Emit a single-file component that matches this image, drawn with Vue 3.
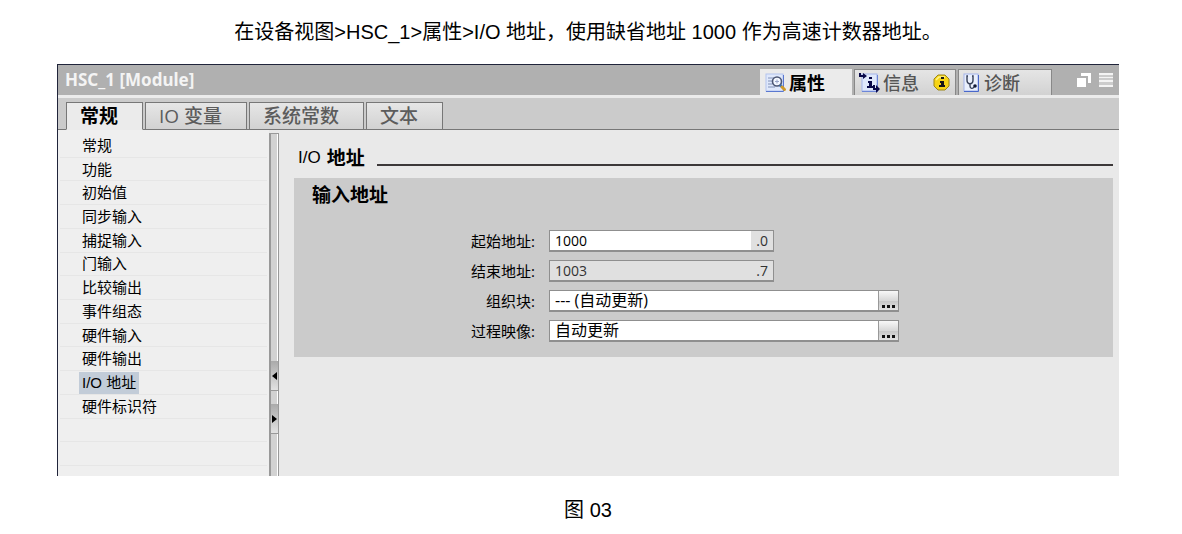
<script setup>
import { ref } from 'vue'

const sections = ['常规', '功能', '初始值', '同步输入', '捕捉输入', '门输入', '比较输出', '事件组态', '硬件输入', '硬件输出', 'I/O 地址', '硬件标识符']
const current = ref('I/O 地址')
const tabs = ['常规', 'IO 变量', '系统常数', '文本']
const activeTab = ref('常规')
const start = ref('1000')
const end = ref('1003')
const block = ref('--- (自动更新)')
const image = ref('自动更新')
</script>

<template>
  <main class="page">
    <p class="caption">在设备视图&gt;HSC_1&gt;属性&gt;I/O 地址，使用缺省地址 1000 作为高速计数器地址。</p>

    <section class="window">
      <header class="titlebar">
        <h1>HSC_1 [Module]</h1>
        <nav class="views">
          <button type="button" class="view on props">
            <svg width="22" height="20" viewBox="0 0 22 20">
              <rect x="1" y="1" width="17" height="17" fill="#dfe8fb" stroke="#b4c4ee" />
              <path d="M1 18.5H18.5V2" fill="none" stroke="#5a78d0" />
              <path d="M3 5h6M3 8h4M3 11h4M3 14h7" stroke="#8292b8" />
              <circle cx="12" cy="8.500" r="4.500" fill="#f3f7ff" stroke="#4c5673" stroke-width="1.600" />
              <path d="M10 8.500h4M12 6.500v4" stroke="#98a4c6" />
              <path d="M15 12l1.500 1.500" stroke="#386fb7" stroke-width="3" />
              <path d="M17 14l2.500 2.500" stroke="#d09a28" stroke-width="3" stroke-linecap="round" />
            </svg>
            <span>属性</span>
          </button>
          <button type="button" class="view info">
            <svg width="22" height="20" viewBox="0 0 22 20">
              <rect x="3" y="1" width="15" height="17" fill="#dfe8fb" stroke="#a3b4ea" />
              <path d="M3 18.500H18.500V2" fill="none" stroke="#6c86d8" />
              <path d="M1 0v3h4M15 12v4h3" fill="none" stroke="#080848" stroke-width="2" />
              <path d="M4 0l4 3-4 3zM17 12l4 4-4 4z" fill="#080848" />
              <path d="M10 4h3v2h-3zM9 8h4v5h2v2H8v-2h2v-3H9z" fill="#080848" />
            </svg>
            <span>信息</span>
            <svg class="badge" width="18" height="18" viewBox="0 0 18 18">
              <path d="M5 1h7l4 4v7l-4 4H5l-4-4V5z" fill="#f6d416" stroke="#9c8616" />
              <path d="M3 6l3-3h6" fill="none" stroke="#fff48a" stroke-width="1.500" />
              <path d="M8 3h3v2H8zM7 7h4v4h1v2H6v-2h2V9H7z" fill="#161616" />
            </svg>
          </button>
          <button type="button" class="view diag">
            <svg width="17" height="20" viewBox="0 0 17 20">
              <rect x="1" y="1" width="14" height="17" fill="#eaf0fd" stroke="#a3b4ea" />
              <path d="M1 18.500H15.500V2" fill="none" stroke="#4968ca" />
              <path d="M5 3H4v4c0 5 6 5 6 0V3H9M7 11v2c0 3 3 3 4 1" fill="none" stroke="#353f58" stroke-width="1.400" />
              <circle cx="12" cy="13" r="1.800" fill="#111936" />
            </svg>
            <span>诊断</span>
          </button>
        </nav>
        <div class="controls">
          <button type="button" aria-label="浮动">
            <svg width="15" height="15" viewBox="0 0 15 15">
              <path d="M5 0h10v10h-3V3H5z" fill="#fff" />
              <path d="M1 5h9v9H1z" fill="#fff" />
            </svg>
          </button>
          <button type="button" aria-label="折叠">
            <svg width="14" height="15" viewBox="0 0 14 15">
              <path d="M0 0h14v14H0z" fill="#ccc" />
              <path d="M0 0h14v2H0zM0 4h14v1H0zM0 7h14v2H0zM0 12h14v2H0z" fill="#f4f4f4" />
            </svg>
          </button>
        </div>
      </header>

      <nav class="tabs">
        <button v-for="t in tabs" :key="t" type="button" class="tab" :class="{ active: t === activeTab }" @click="activeTab = t">{{ t }}</button>
      </nav>

      <div class="body">
        <ul class="tree">
          <li v-for="s in sections" :key="s">
            <button type="button" :class="{ chosen: s === current }" @click="current = s">{{ s }}</button>
          </li>
          <li></li>
          <li></li>
        </ul>
        <div class="splitter">
          <button type="button" aria-label="向左折叠"><svg width="5" height="8" viewBox="0 0 5 8"><path d="M5 0v8L0 4z" /></svg></button>
          <button type="button" aria-label="向右展开"><svg width="5" height="8" viewBox="0 0 5 8"><path d="M0 0v8l5-4z" /></svg></button>
        </div>
        <div class="content">
          <h2><span class="latin">I/O</span> 地址</h2>
          <div class="group">
            <h3>输入地址</h3>
            <form class="form" @submit.prevent>
              <label for="start">起始地址:</label>
              <div class="field short"><input id="start" v-model="start" type="text"><span class="bit">.0</span></div>
              <label for="end">结束地址:</label>
              <div class="field short locked"><input id="end" v-model="end" type="text" readonly><span class="bit">.7</span></div>
              <label for="block">组织块:</label>
              <div class="field"><input id="block" v-model="block" type="text"><button type="button" aria-label="选择组织块"><i></i><i></i><i></i></button></div>
              <label for="image">过程映像:</label>
              <div class="field"><input id="image" v-model="image" type="text"><button type="button" aria-label="选择过程映像"><i></i><i></i><i></i></button></div>
            </form>
          </div>
        </div>
      </div>
    </section>

    <p class="figure">图 03</p>
  </main>
</template>

<style>
body {
  background: #fff;
}
</style>

<style scoped>
* {
  box-sizing: border-box;
}
button,
input {
  font: inherit;
  color: inherit;
  margin: 0;
  padding: 0;
  border: 0;
  background: none;
}
svg {
  display: block;
  flex: none;
}
.page {
  color: #000;
  font-family: "Liberation Sans", "Noto Sans CJK SC", sans-serif;
}
.caption,
.figure {
  margin: 0;
  font-size: 20px;
  line-height: 28px;
  text-align: center;
}
.caption {
  padding: 18px 6px 18px 0;
}
.figure {
  padding: 20px 6px 8px 0;
}
.window {
  margin: 0 63px 0 57px;
  border-top: 1px solid #20243a;
  border-left: 1px solid #20243a;
  background: #e9e9e9;
  font-family: "Open Sans", "Noto Sans CJK SC", sans-serif;
}
.titlebar {
  display: flex;
  height: 33px;
  background: #b0b0b0;
  border-bottom: 3px solid #ebebeb;
}
h1 {
  flex: 1;
  margin: 0;
  padding-left: 7px;
  font-family: "Noto Sans", sans-serif;
  font-size: 17px;
  font-weight: 700;
  line-height: 30px;
  color: #f4f4f4;
}
.views {
  display: flex;
  align-items: flex-end;
  gap: 2px;
}
.view {
  display: flex;
  align-items: center;
  gap: 2px;
  height: 26px;
  padding-left: 4px;
  font-size: 18px;
  font-weight: 500;
  line-height: 26px;
  color: #555;
  background: linear-gradient(#e5e5e5, #d2d2d2);
  border: 1px solid #888;
  border-bottom: 0;
}
.view.on {
  color: #000;
  font-weight: 700;
  background: #ebebeb;
  border-color: #ebebeb;
}
.props {
  width: 92px;
}
.info {
  width: 102px;
}
.diag {
  width: 94px;
}
.badge {
  margin-left: 12px;
}
.diag span {
  margin-left: 2px;
}
.controls {
  display: flex;
  align-items: center;
  gap: 8px;
  padding: 0 6px 0 24px;
}
.tabs {
  display: flex;
  align-items: flex-end;
  gap: 2px;
  height: 32px;
  padding-left: 8px;
  background: #cbcbcb;
  box-shadow: inset 0 -1px #777;
}
.tab {
  height: 28px;
  padding: 0 24px 0 13px;
  font-size: 19px;
  font-weight: 500;
  line-height: 26px;
  color: #5c5c5c;
  background: linear-gradient(#e6e6e6, #d2d2d2);
  border: 1px solid #777;
}
.tab.active {
  color: #000;
  font-weight: 700;
  background: #ebebeb;
  border-bottom-color: #ebebeb;
}
.body {
  display: flex;
  min-height: 346px;
}
.tree {
  display: grid;
  grid-auto-rows: minmax(0, 1fr);
  align-self: flex-start;
  flex: 0 0 211px;
  height: 336px;
  margin: 0;
  padding: 4px 2px 0;
  list-style: none;
  font-size: 15px;
  background: #efefef;
  box-shadow: 0 10px #efefef;
}
.tree li {
  display: flex;
  align-items: center;
  padding: 1px 0 0 19px;
  border-bottom: 1px solid #e6e6e6;
}
.tree button {
  height: 22px;
  padding: 0 3px;
  line-height: 22px;
  font-family: "Liberation Sans", "Noto Sans CJK SC", sans-serif;
}
.tree .chosen {
  background: #c2ccd8;
}
.splitter {
  display: flex;
  flex-direction: column;
  justify-content: flex-end;
  flex: 0 0 10px;
  gap: 13px;
  margin-top: 3px;
  padding-bottom: 42px;
  background: #d2d2d2;
  border: 1px solid #999;
  border-width: 1px 1px 0 2px;
  box-shadow: inset -1px 0 #fff;
}
.splitter button {
  display: flex;
  align-items: center;
  justify-content: center;
  width: 7px;
  height: 30px;
  background: linear-gradient(#aaa, #e2e2e2);
  border-bottom: 1px solid #999;
}
.content {
  flex: 1;
  padding: 13px 6px 0 15px;
}
h2,
h3 {
  margin: 0;
  font-size: 19px;
  font-weight: 700;
  line-height: 30px;
}
h2 {
  display: flex;
  align-items: center;
  gap: 6px;
  padding-left: 4px;
}
h2::after {
  content: "";
  flex: 1;
  height: 2px;
  margin: 14px 0 0 6px;
  background: #3c3839;
}
.latin {
  font-family: "Liberation Sans", sans-serif;
  font-weight: 400;
  font-size: 17px;
}
.group {
  margin-top: 5px;
  padding: 2px 18px 15px;
  background: #cbcbcb;
}
.form {
  display: grid;
  grid-template-columns: 223px minmax(0, 350px);
  column-gap: 14px;
  row-gap: 8px;
  margin-top: 20px;
  font-size: 15px;
  line-height: 22px;
}
label {
  text-align: right;
}
.field {
  display: flex;
  height: 22px;
  font-size: 16px;
  background: #fff;
  border: 1px solid #8f8f8f;
  border-bottom-width: 2px;
}
.short {
  width: 225px;
  font-size: 14px;
  font-weight: 500;
}
.field input {
  flex: 1;
  min-width: 0;
  padding-left: 5px;
  line-height: 19px;
  outline: 0;
}
.bit {
  width: 22px;
  padding-right: 5px;
  line-height: 20px;
  text-align: right;
  color: #333;
  background: #e0e0e0;
}
.locked {
  color: #333;
  background: #e0e0e0;
}
.field button {
  display: flex;
  align-items: flex-end;
  justify-content: center;
  gap: 2px;
  width: 20px;
  padding-bottom: 2px;
  background: linear-gradient(#f8f8f8, #d8d8d8 50%, #c8c8c8 55%, #e2e2e2);
  border-left: 1px solid #999;
}
.field i {
  width: 3px;
  height: 3px;
  background: #111;
}
</style>
